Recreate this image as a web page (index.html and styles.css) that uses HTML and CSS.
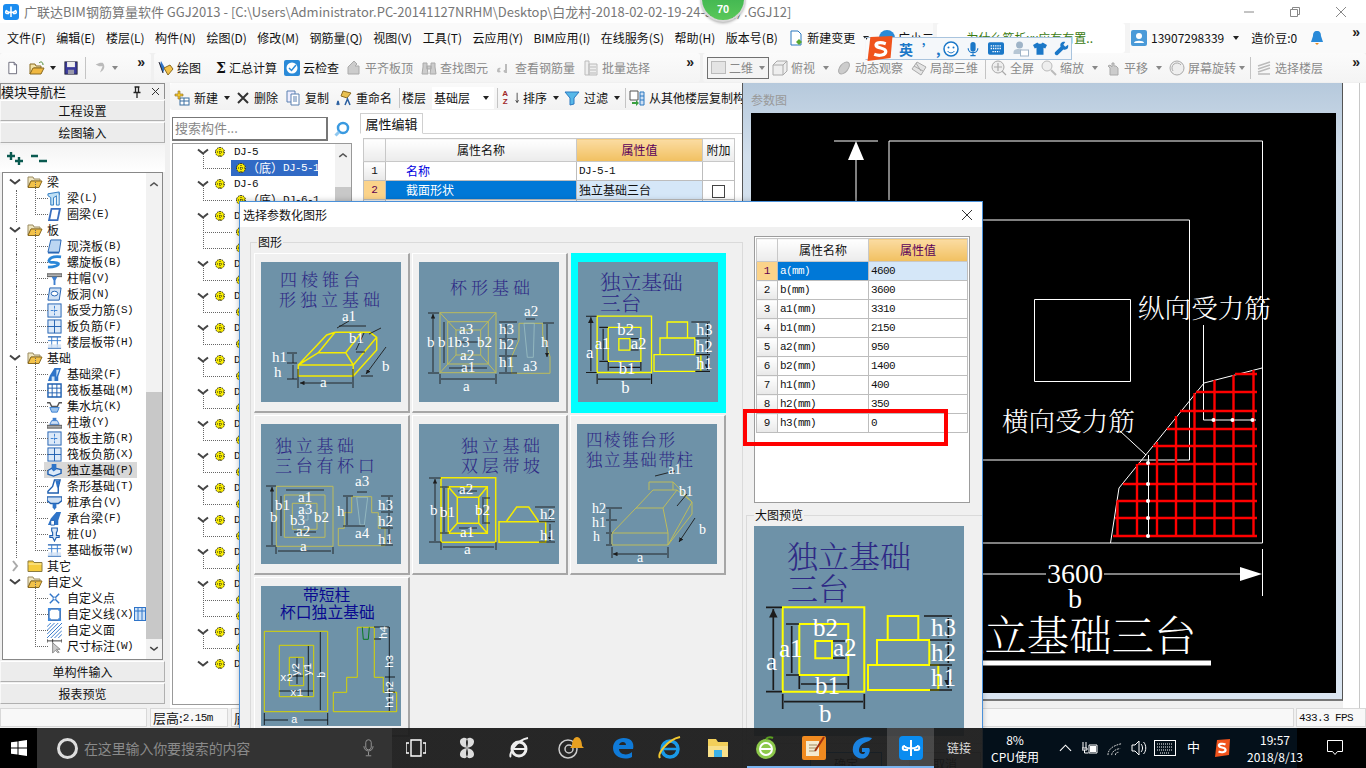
FILE: index.html
```html
<!DOCTYPE html>
<html lang="zh-CN">
<head>
<meta charset="utf-8">
<title>广联达BIM钢筋算量软件 GGJ2013</title>
<link rel="stylesheet" href="styles.css">
</head>
<body>
<svg class="sprite" aria-hidden="true">
  <defs>
    <marker id="arr" viewBox="0 0 6 6" refX="6" refY="3" markerWidth="5" markerHeight="5" orient="auto-start-reverse"><path d="M0 0L6 3L0 6z" fill="#1c1c1c"/></marker>
    <symbol id="chev" viewBox="0 0 16 16"><path d="M3 5.500l5 4 5-4" fill="none" stroke="#444" stroke-width="2"/></symbol>
    <symbol id="chevr" viewBox="0 0 16 16"><path d="M6 3l4 5-4 5" fill="none" stroke="#aaa" stroke-width="2"/></symbol>
    <symbol id="chevu" viewBox="0 0 16 16"><path d="M3 10.500l5-4 5 4" fill="none" stroke="#555" stroke-width="2"/></symbol>
    <symbol id="fopen" viewBox="0 0 16 16"><path d="M1 3h5l1 2h6v2H4L1 13z" fill="#efe6c0" stroke="#9a8a60"/><path d="M4 7h11l-3 6.500H1z" fill="#f3c24a" stroke="#8a6a20"/></symbol>
    <symbol id="fclosed" viewBox="0 0 16 16"><path d="M1 3h5l1 1.500h8v9H1z" fill="#f6cc3e" stroke="#8a7a40"/><path d="M1.500 6h13" stroke="#fff2b0"/></symbol>
    <symbol id="i-beam" viewBox="0 0 16 16"><path d="M1 3l12-2v3l-6 3v8H4V7L1 5z" fill="#bfe0f5" stroke="#2a78c0"/><path d="M10 5v10h3V2" fill="#dff0fa" stroke="#2a78c0"/></symbol>
    <symbol id="i-ring" viewBox="0 0 16 16"><path d="M4 1h11l-3 14H1z" fill="#3a6fc0"/><path d="M5.500 3h7l-2 10h-7z" fill="#fff"/></symbol>
    <symbol id="i-slab" viewBox="0 0 16 16"><path d="M4 1h11l-2 13H1z" fill="#bcd6f2" stroke="#1f5fb0"/><path d="M1 14h12v1.500H1z" fill="#1f5fb0"/></symbol>
    <symbol id="i-spiral" viewBox="0 0 16 16"><path d="M15 2C7 1 3 3 2 6c0 3 8 1 10 3 1 2-4 4-11 4" fill="none" stroke="#2a86d8" stroke-width="3"/></symbol>
    <symbol id="i-cap" viewBox="0 0 16 16"><path d="M0 3h16v3H0z" fill="#b0b0b0" stroke="#555"/><path d="M5 6h6l-2 4H7z M7 10h2v5H7z" fill="#3f7fd0"/></symbol>
    <symbol id="i-hole" viewBox="0 0 16 16"><path d="M3 1h12l-2 13H1z" fill="#cfe0f4" stroke="#1f5fb0"/><ellipse cx="8" cy="7" rx="3.500" ry="2.500" fill="#fff" stroke="#1f5fb0"/></symbol>
    <symbol id="i-rebar" viewBox="0 0 16 16"><rect x="1" y="1" width="14" height="14" fill="#dce9f8" stroke="#1f5fb0"/><path d="M8 3v10M4 8h8" stroke="#3b7fd0" stroke-dasharray="3 1"/></symbol>
    <symbol id="i-neg" viewBox="0 0 16 16"><rect x="1" y="1" width="14" height="14" fill="#dce9f8" stroke="#1f5fb0"/><path d="M8 1v14M1 8h14" stroke="#1f5fb0"/></symbol>
    <symbol id="i-strip" viewBox="0 0 16 16"><path d="M1 2h14M1 14h14" stroke="#1f5fb0" stroke-width="1.500"/><path d="M5 2v12M11 2v12M1 6h14" stroke="#3b7fd0"/><rect x="1" y="10" width="14" height="4" fill="#cfe0f4" opacity=".8"/></symbol>
    <symbol id="i-fbeam" viewBox="0 0 16 16"><path d="M1 15l2-6 5-8h7l-3 9v5z" fill="#2f74c8"/><path d="M5 15v-5h3v5zM10 3h3l-3 8z" fill="#cde3f7"/></symbol>
    <symbol id="i-raft" viewBox="0 0 16 16"><path d="M1 1h14v14H1z" fill="#fff" stroke="#1f5fb0" stroke-width="1.500"/><path d="M5.500 1v14M10.500 1v14M1 5.500h14M1 10.500h14" stroke="#1f5fb0"/></symbol>
    <symbol id="i-pit" viewBox="0 0 16 16"><path d="M0 4h3l2 4h6l2-4h3" fill="none" stroke="#555" stroke-width="1.500"/><path d="M3 9h10l-2 5H5z" fill="#9cc4ee" stroke="#3b7fd0"/></symbol>
    <symbol id="i-pier" viewBox="0 0 16 16"><path d="M6 3h4v3H6z" fill="#3f7fd0"/><path d="M5 6h6l2 4H3z" fill="#cfe0f4" stroke="#3f7fd0"/><path d="M0 11h16v3H0z" fill="#aaa" stroke="#555"/></symbol>
    <symbol id="i-found" viewBox="0 0 16 16"><path d="M1 8l5-3 9 2v4l-8 3-6-2z" fill="#dce9f8" stroke="#1f5fb0" stroke-width="1.500"/><path d="M5 1h5v6l-3 2-2-2z" fill="#2f74c8"/></symbol>
    <symbol id="i-strip2" viewBox="0 0 16 16"><path d="M1 15v-2l5-5 2-7h6L12 9v6z" fill="#fff" stroke="#1f5fb0" stroke-width="1.500"/><path d="M9 2h5l-3 8z" fill="#2f74c8"/></symbol>
    <symbol id="i-pcap" viewBox="0 0 16 16"><path d="M0 2h16v4l-4 3H4L0 6z" fill="#cfe0f4" stroke="#1f5fb0" stroke-width="1.500"/><path d="M6 9h4v4l-2 3-2-3z" fill="#2f74c8"/></symbol>
    <symbol id="i-cbeam" viewBox="0 0 16 16"><path d="M1 15l3-7 6-7h5l-3 9v5z" fill="#2f74c8"/><path d="M4 15v-5h4v5z" fill="#fff" stroke="#1f5fb0"/></symbol>
    <symbol id="i-pile" viewBox="0 0 16 16"><path d="M5 1h6v3l-1 2v3h3v2H10l-2 4-2-4H3V9h3V6L5 4z" fill="#dce9f8" stroke="#1f5fb0" stroke-width="1.200"/></symbol>
    <symbol id="i-point" viewBox="0 0 16 16"><path d="M3 3l10 10M13 3L3 13" stroke="#2f74c8" stroke-width="1.500"/><circle cx="8" cy="8" r="1.500" fill="#fff" stroke="#2f74c8"/></symbol>
    <symbol id="i-cline" viewBox="0 0 16 16"><rect x="2" y="2" width="12" height="12" fill="none" stroke="#1f5fb0" stroke-width="1.500"/><path d="M1 1h3v3H1zM12 1h3v3h-3zM1 12h3v3H1zM12 12h3v3h-3z" fill="#3f8ae0"/></symbol>
    <symbol id="i-hatch" viewBox="0 0 16 16"><path d="M0 4l4-4M0 8l8-8M0 12L12 0M0 16L16 0M4 16L16 4M8 16l8-8M12 16l4-4" stroke="#2f74c8"/></symbol>
    <symbol id="i-dim" viewBox="0 0 16 16"><path d="M0 2h16M0 0v4M6 0v4M16 0v4" stroke="#333"/><path d="M6 4v11l3-3 3 3 1-1-3-3h4z" fill="#ccc" stroke="#888"/></symbol>
    <symbol id="i-grid" viewBox="0 0 12 14"><rect x=".5" y=".5" width="11" height="13" fill="#cfe3f8" stroke="#2f74c8"/><path d="M4 1v12M8 1v12M1 4h10" stroke="#2f74c8"/></symbol>
    <symbol id="gear" viewBox="0 0 12 12"><circle cx="6" cy="6" r="4.500" fill="#f8ec00" stroke="#222" stroke-dasharray="1.500 1"/><path d="M1 6h10M6 1v10" stroke="#222" stroke-dasharray="1 1"/></symbol>
    <symbol id="t-new" viewBox="0 0 16 16"><path d="M3.500 1H10l3 3v11H3.500z" fill="#fff" stroke="#556"/><path d="M10 1v3h3" fill="#dde" stroke="#556"/></symbol>
    <symbol id="t-open" viewBox="0 0 16 16"><path d="M1 4h5l1 2h5v2H5l-4 6z" fill="#f3e3a8" stroke="#8a6a20"/><path d="M4 8h11l-3 6H1z" fill="#f0b840" stroke="#8a6a20"/><path d="M10 3c2-2 4-1 4 2" fill="none" stroke="#4a8a30"/></symbol>
    <symbol id="t-save" viewBox="0 0 16 16"><rect x="1" y="1" width="14" height="14" fill="#3a3a9c" stroke="#223"/><rect x="3.500" y="1" width="9" height="6" fill="#eee"/><rect x="4.500" y="10" width="7" height="5" fill="#99a"/></symbol>
    <symbol id="t-undo" viewBox="0 0 16 16"><path d="M11 2c3 3 3 8-3 11l3-7H7l-4-2 5-2z" fill="#bbb"/></symbol>
    <symbol id="t-draw" viewBox="0 0 16 16"><path d="M3 1l4 7-2 5-3-8z" fill="#2f74c8"/><path d="M6 8l6-3 3 4-5 6z" fill="#f3c24a" stroke="#8a6a20"/><path d="M1 2l4 11" stroke="#223"/></symbol>
    <symbol id="t-cloud" viewBox="0 0 16 16"><rect width="16" height="16" rx="2" fill="#2a8ad8"/><circle cx="8" cy="8" r="5.500" fill="#fff"/><path d="M5 8l2.500 2.500L12 5" fill="none" stroke="#2a8ad8" stroke-width="1.500"/></symbol>
    <symbol id="t-gray1" viewBox="0 0 16 16"><path d="M2 14V7l6-6 3 3-2 2h4v8z" fill="#ccc" stroke="#aaa"/></symbol>
    <symbol id="t-bino" viewBox="0 0 16 16"><path d="M2 3h4v4l1 7H1l1-7zM10 3h4v4l1 7H9l1-7zM6 6h4v3H6z" fill="#ccc" stroke="#aaa"/></symbol>
    <symbol id="t-look" viewBox="0 0 16 16"><path d="M1 11c0-3 2-4 4-3-2 1-2 3 0 4-3 1-4 0-4-1zM9 4h2v9H9c-2-1-2-3 0-3z" fill="#bbb"/></symbol>
    <symbol id="t-batch" viewBox="0 0 16 16"><path d="M2 1h4v14H2zM6 4h8v11H6z" fill="#eee" stroke="#bbb"/><path d="M7 7h6M7 10h6M7 13h6" stroke="#bbb"/></symbol>
    <symbol id="t-cube" viewBox="0 0 16 16"><path d="M1 5l4-4h10v10l-4 4H1zM1 5h10v10M11 5l4-4" fill="#eee" stroke="#aaa"/></symbol>
    <symbol id="t-orbit" viewBox="0 0 16 16"><ellipse cx="8" cy="8" rx="4" ry="7" transform="rotate(40 8 8)" fill="#ccc" stroke="#aaa"/></symbol>
    <symbol id="t-loc" viewBox="0 0 16 16"><path d="M1 9l5-7 9 5-5 8zM5 3l5 8M3 6l9 5" fill="#e4e4e4" stroke="#aaa"/></symbol>
    <symbol id="t-zoomall" viewBox="0 0 16 16"><circle cx="7" cy="7" r="6" fill="#eee" stroke="#aaa"/><path d="M7 3v8M3 7h8M11 11l4 4" stroke="#aaa" stroke-width="1.200"/></symbol>
    <symbol id="t-zoom" viewBox="0 0 16 16"><circle cx="6" cy="6" r="5" fill="#eee" stroke="#bbb"/><path d="M10 10l5 5" stroke="#bbb" stroke-width="2"/></symbol>
    <symbol id="t-pan" viewBox="0 0 16 16"><path d="M5 15V8L3 6l2-1 2 2V3h2v3h2l2 2v7z" fill="#ccc" stroke="#aaa"/></symbol>
    <symbol id="t-rot" viewBox="0 0 16 16"><circle cx="8" cy="8" r="7" fill="#eee" stroke="#aaa"/><path d="M4 11a5 5 0 0 1 8-6" fill="none" stroke="#aaa"/></symbol>
    <symbol id="t-layers" viewBox="0 0 16 16"><path d="M2 6l12-4M2 9l12-4M2 12l12-4M2 14h12" stroke="#bbb" stroke-width="1.500"/></symbol>
    <symbol id="t-change" viewBox="0 0 16 16"><path d="M3 1h7l3 3v11H3z" fill="#fff" stroke="#2a78c0"/><path d="M11 9l3 3-3 3-3-3z" fill="#5aa830"/></symbol>
    <symbol id="c-new" viewBox="0 0 16 16"><rect x="6" y="8" width="9" height="7" fill="#fff" stroke="#3a6fa0"/><path d="M6 11h9M10 8v7" stroke="#3a6fa0"/><path d="M4 1h2v3h3v2H6v3H4V6H1V4h3z" fill="#f3c830" stroke="#8a6a20" stroke-width=".6"/></symbol>
    <symbol id="c-del" viewBox="0 0 14 14"><path d="M2 2l10 10M12 2L2 12" stroke="#333" stroke-width="2"/></symbol>
    <symbol id="c-copy" viewBox="0 0 16 16"><path d="M2 1h8v11H2z" fill="#eef" stroke="#5a80b0"/><path d="M6 4h8v11H6z" fill="#fff" stroke="#5a80b0"/><path d="M8 7h4M8 9h4M8 11h4" stroke="#5a80b0"/></symbol>
    <symbol id="c-ren" viewBox="0 0 16 16"><path d="M7 1l8 2-4 5-6-2z" fill="#e8c050" stroke="#8a6a20"/><path d="M1 15l1-4 1 4M9 15l2.500-6 2.500 6" fill="none" stroke="#2a5fa0" stroke-width="1.500"/></symbol>
    <symbol id="c-sort" viewBox="0 0 12 16"><path d="M9.500 1v13M7.500 11l2 3 2-3" fill="none" stroke="#222"/></symbol>
    <symbol id="c-filter" viewBox="0 0 16 16"><path d="M1 2h14l-5 6v6l-4 1V8z" fill="#58b8e8" stroke="#2a78c0"/></symbol>
    <symbol id="c-cp2" viewBox="0 0 16 16"><path d="M1 1h8v9H1z" fill="#fff" stroke="#555"/><path d="M3 12h4v-2l3 3-3 3v-2H3z" fill="#3aa040"/><path d="M11 2h4v13h-4z" fill="#cfe0f4" stroke="#2a78c0"/><path d="M11 6h4M11 10h4" stroke="#2a78c0"/></symbol>
    <symbol id="search" viewBox="0 0 16 16"><circle cx="9" cy="7" r="5" fill="#fff" stroke="#3a9ae0" stroke-width="2.500"/><path d="M5 11l-3.500 3.500" stroke="#90c8f0" stroke-width="3"/></symbol>
    <symbol id="d-san" viewBox="0 0 210 210">
      <rect width="210" height="210" fill="#6e92a8"/>
      <text class="dt dt-big" x="33" y="42">独立基础</text>
      <text class="dt dt-big" x="33" y="74">三台</text>
      <path class="yb" d="M28.700 81.300h81.600v84.400H28.700zM45.300 98h49v51h-49zM61.300 115H78v17.300H61.300zM133.700 90h30.600v24h-30.600zM123 114h52.300v25H123zM114 139h70.300v25H114z"/>
      <path class="dk2" d="M12 81.300h16M12 165.700h16M32 98h13M32 149h13M79 115h12M79 132h12M45.300 150v13M94.300 150v13M28.700 168v15M110.300 168v15M170 90h28M176 114h22M176 139h22M176 164h22"/>
      <path class="dk2 ar" d="M19.300 83V164M37.700 100V147M47 158h46M30 175.700h79M194.300 92V112M194.300 116v21M194.300 141v21"/>
      <g class="wt wt-big">
        <text x="12" y="144">a</text><text x="25" y="131">a1</text><text x="59" y="110">b2</text><text x="79" y="130">a2</text><text x="61" y="168">b1</text><text x="65" y="196">b</text><text x="177" y="110">h3</text><text x="177" y="135">h2</text><text x="177" y="160">h1</text>
      </g>
    </symbol>
    <symbol id="tb-win" viewBox="0 0 16 16"><path d="M0 2.300l6.500-.9v6.200H0zM7.500 1.200L16 0v7.600H7.500zM0 8.500h6.500v6.100L0 13.700zM7.500 8.500H16V16l-8.500-1.200z" fill="#fff"/></symbol>
  </defs>
</svg>

<header class="titlebar">
  <svg class="logo" viewBox="0 0 16 16"><rect width="16" height="16" rx="3" fill="#1a8cf0"/><path d="M8 2.500V13M4 6.500c0 2.500 8 2.500 8 0M4 6.500c-1.500 0-2 3 0 3h2M12 6.500c1.500 0 2 3 0 3h-2" fill="none" stroke="#fff" stroke-width="1.500"/></svg>
  <span class="title-text">广联达BIM钢筋算量软件 GGJ2013 - [C:\Users\Administrator.PC-20141127NRHM\Desktop\白龙村-2018-02-02-19-24-35(白) .GGJ12]</span>
  <div class="winctl">
    <svg viewBox="0 0 10 10"><path d="M0 5h10" stroke="#888"/></svg>
    <svg viewBox="0 0 10 10"><path d="M.5 2.500h7v7h-7zM2.500 2.500v-2h7v7h-2" fill="none" stroke="#888"/></svg>
    <svg viewBox="0 0 10 10"><path d="M0 0l10 10M10 0L0 10" stroke="#888"/></svg>
  </div>
</header>

<nav class="menubar">
  <div class="menu-items">
    <span>文件(F)</span><span>编辑(E)</span><span>楼层(L)</span><span>构件(N)</span><span>绘图(D)</span><span>修改(M)</span><span>钢筋量(Q)</span><span>视图(V)</span><span>工具(T)</span><span>云应用(Y)</span><span>BIM应用(I)</span><span>在线服务(S)</span><span>帮助(H)</span><span>版本号(B)</span>
    <span class="mi-icon"><svg class="ic16"><use href="#t-change"/></svg>新建变更<b class="caret"></b></span>
    <span class="mi-icon mi-guang"><svg class="ic16" viewBox="0 0 16 16"><circle cx="8" cy="8" r="8" fill="#2a8ad8"/></svg>广小二</span>
  </div>
  <div class="news"><span>为什么筋析xx应有有置..</span></div>
  <div class="userbox">
    <svg class="ic16" viewBox="0 0 16 16"><rect width="16" height="16" rx="2" fill="#4a9ad8"/><circle cx="8" cy="6" r="3" fill="#fff"/><path d="M3 13c0-3 10-3 10 0z" fill="#fff"/></svg>
    <span>13907298339</span><b class="caret"></b><span class="ml8">造价豆:0</span>
    <svg class="ic16 ml8" viewBox="0 0 16 16"><path d="M8 1c3 0 4 2 4 5l2 6H2l2-6c0-3 1-5 4-5z" fill="#2a8ad8"/><path d="M6 13h4l-2 2z" fill="#e88a20"/></svg>
    <span class="more push">»</span>
  </div>
</nav>

<div class="toolbar">
  <div class="tseg tseg1">
    <svg class="ic12"><use href="#t-new"/></svg>
    <svg class="ic16 ml10"><use href="#t-open"/></svg><b class="caret ml6"></b>
    <svg class="ic14 ml8"><use href="#t-save"/></svg>
    <i class="tsep ml7"></i>
    <svg class="ic14 ml7"><use href="#t-undo"/></svg><b class="caret caret-g ml10"></b>
    <span class="more push">»</span>
  </div>
  <div class="tseg tseg2">
    <span class="tb"><svg class="ic16"><use href="#t-draw"/></svg>绘图</span>
    <span class="tb ml15"><b class="sigma">Σ</b>汇总计算</span>
    <span class="tb ml7"><svg class="ic16"><use href="#t-cloud"/></svg>云检查</span>
    <span class="tb dis ml7"><svg class="ic16"><use href="#t-gray1"/></svg>平齐板顶</span>
    <span class="tb dis ml8"><svg class="ic16"><use href="#t-bino"/></svg>查找图元</span>
    <span class="tb dis ml8"><svg class="ic16"><use href="#t-look"/></svg>查看钢筋量</span>
    <span class="tb dis ml8"><svg class="ic16"><use href="#t-batch"/></svg>批量选择</span>
    <span class="more push">»</span>
  </div>
  <div class="tseg tseg3">
    <span class="view2d"><i class="sq"></i>二维<b class="caret caret-g"></b></span>
    <span class="tb dis ml3"><svg class="ic16"><use href="#t-cube"/></svg>俯视<b class="caret caret-g ml3"></b></span>
    <span class="tb dis ml7"><svg class="ic16"><use href="#t-orbit"/></svg>动态观察</span>
    <span class="tb dis ml8"><svg class="ic16"><use href="#t-loc"/></svg>局部三维</span>
    <i class="tsep ml7"></i>
    <span class="tb dis ml5"><svg class="ic16"><use href="#t-zoomall"/></svg>全屏</span>
    <span class="tb dis ml7"><svg class="ic16"><use href="#t-zoom"/></svg>缩放<b class="caret caret-g ml3"></b></span>
    <span class="tb dis ml7"><svg class="ic16"><use href="#t-pan"/></svg>平移<b class="caret caret-g ml3"></b></span>
    <span class="tb dis ml7"><svg class="ic16"><use href="#t-rot"/></svg>屏幕旋转<b class="caret caret-g ml2"></b></span>
    <i class="tsep ml5"></i>
    <span class="tb dis ml5"><svg class="ic16"><use href="#t-layers"/></svg>选择楼层</span>
    <span class="more push">»</span>
  </div>
</div>

<main class="workspace">
  <aside class="nav">
    <div class="nav-head">
      <span class="nav-name">模块导航栏</span>
      <svg class="nav-pin" viewBox="0 0 10 12"><path d="M2.500 1h5M3.500 1v5M6.500 1v5M1.500 6.500h7M5 7v5" fill="none" stroke="#222" stroke-width="1.300"/></svg>
      <svg class="nav-x" viewBox="0 0 9 9"><path d="M1 1l7 7M8 1L1 8" stroke="#333"/></svg>
    </div>
    <button class="nav-btn">工程设置</button>
    <button class="nav-btn">绘图输入</button>
    <div class="nav-tools">
      <svg viewBox="0 0 18 16"><path d="M1 5h8M5 1v8M9 10h8M13 6v8" stroke="#0a5a50" stroke-width="2.400"/></svg>
      <svg viewBox="0 0 18 16"><path d="M1 5h7M9 10h8" stroke="#0a5a50" stroke-width="2.400"/></svg>
    </div>
    <div class="nav-tree">
      <div class="rows">
        <div class="row p"><svg class="chev"><use href="#chev"/></svg><svg class="fold"><use href="#fopen"/></svg>梁</div>
        <div class="row c"><svg class="ric"><use href="#i-beam"/></svg>梁<i>(L)</i></div>
        <div class="row c"><svg class="ric"><use href="#i-ring"/></svg>圈梁<i>(E)</i></div>
        <div class="row p"><svg class="chev"><use href="#chev"/></svg><svg class="fold"><use href="#fopen"/></svg>板</div>
        <div class="row c"><svg class="ric"><use href="#i-slab"/></svg>现浇板<i>(B)</i></div>
        <div class="row c"><svg class="ric"><use href="#i-spiral"/></svg>螺旋板<i>(B)</i></div>
        <div class="row c"><svg class="ric"><use href="#i-cap"/></svg>柱帽<i>(V)</i></div>
        <div class="row c"><svg class="ric"><use href="#i-hole"/></svg>板洞<i>(N)</i></div>
        <div class="row c"><svg class="ric"><use href="#i-rebar"/></svg>板受力筋<i>(S)</i></div>
        <div class="row c"><svg class="ric"><use href="#i-neg"/></svg>板负筋<i>(F)</i></div>
        <div class="row c"><svg class="ric"><use href="#i-strip"/></svg>楼层板带<i>(H)</i></div>
        <div class="row p"><svg class="chev"><use href="#chev"/></svg><svg class="fold"><use href="#fopen"/></svg>基础</div>
        <div class="row c"><svg class="ric"><use href="#i-fbeam"/></svg>基础梁<i>(F)</i></div>
        <div class="row c"><svg class="ric"><use href="#i-raft"/></svg>筏板基础<i>(M)</i></div>
        <div class="row c"><svg class="ric"><use href="#i-pit"/></svg>集水坑<i>(K)</i></div>
        <div class="row c"><svg class="ric"><use href="#i-pier"/></svg>柱墩<i>(Y)</i></div>
        <div class="row c"><svg class="ric"><use href="#i-rebar"/></svg>筏板主筋<i>(R)</i></div>
        <div class="row c"><svg class="ric"><use href="#i-neg"/></svg>筏板负筋<i>(X)</i></div>
        <div class="row c sel"><svg class="ric"><use href="#i-found"/></svg>独立基础<i>(P)</i></div>
        <div class="row c"><svg class="ric"><use href="#i-strip2"/></svg>条形基础<i>(T)</i></div>
        <div class="row c"><svg class="ric"><use href="#i-pcap"/></svg>桩承台<i>(V)</i></div>
        <div class="row c"><svg class="ric"><use href="#i-cbeam"/></svg>承台梁<i>(F)</i></div>
        <div class="row c"><svg class="ric"><use href="#i-pile"/></svg>桩<i>(U)</i></div>
        <div class="row c"><svg class="ric"><use href="#i-strip"/></svg>基础板带<i>(W)</i></div>
        <div class="row p"><svg class="chev"><use href="#chevr"/></svg><svg class="fold"><use href="#fclosed"/></svg>其它</div>
        <div class="row p"><svg class="chev"><use href="#chev"/></svg><svg class="fold"><use href="#fopen"/></svg>自定义</div>
        <div class="row c last"><svg class="ric"><use href="#i-point"/></svg>自定义点</div>
        <div class="row c last"><svg class="ric"><use href="#i-cline"/></svg>自定义线<i>(X)</i><svg class="mini"><use href="#i-grid"/></svg></div>
        <div class="row c last"><svg class="ric"><use href="#i-hatch"/></svg>自定义面</div>
        <div class="row c last"><svg class="ric"><use href="#i-dim"/></svg>尺寸标注<i>(W)</i></div>
      </div>
      <div class="scroll scroll-nav">
        <span class="sb"><svg><use href="#chevu"/></svg></span>
        <span class="thumb"></span>
        <span class="sb"><svg><use href="#chev"/></svg></span>
      </div>
    </div>
    <button class="nav-btn nav-btn-2">单构件输入</button>
    <button class="nav-btn">报表预览</button>
  </aside>

  <section class="editor">
    <div class="comp-tools">
      <span class="tb"><svg class="ic16"><use href="#c-new"/></svg>新建<b class="caret"></b></span>
      <span class="tb ml6"><svg class="ic14"><use href="#c-del"/></svg>删除</span>
      <span class="tb ml7"><svg class="ic16"><use href="#c-copy"/></svg>复制</span>
      <span class="tb ml7"><svg class="ic16"><use href="#c-ren"/></svg>重命名</span>
      <i class="tsep ml7"></i>
      <span class="tb ml2">楼层</span>
      <span class="floor"><span>基础层</span><b class="caret"></b></span>
      <i class="tsep ml3"></i>
      <span class="tb ml3"><span class="az">A<br>Z</span><svg class="ic-sort"><use href="#c-sort"/></svg>排序<b class="caret"></b></span>
      <span class="tb ml5"><svg class="ic16"><use href="#c-filter"/></svg>过滤<b class="caret"></b></span>
      <i class="tsep ml5"></i>
      <span class="tb ml3 nowrap"><svg class="ic16"><use href="#c-cp2"/></svg>从其他楼层复制构</span>
    </div>
    <div class="panes">
      <div class="comp-pane">
        <div class="search-row"><div class="search-input">搜索构件...</div><svg class="ic16"><use href="#search"/></svg></div>
        <div class="comp-tree">
          <div class="rows">
            <div class="crow p"><svg class="chev"><use href="#chev"/></svg><svg class="g"><use href="#gear"/></svg><i>DJ-5</i></div>
            <div class="crow c sel"><span class="cbody"><svg class="g"><use href="#gear"/></svg>（底）<i>DJ-5-1</i></span></div>
            <div class="crow p"><svg class="chev"><use href="#chev"/></svg><svg class="g"><use href="#gear"/></svg><i>DJ-6</i></div>
            <div class="crow c"><span class="cbody"><svg class="g"><use href="#gear"/></svg>（底）<i>DJ-6-1</i></span></div>
            <div class="crow p"><svg class="chev"><use href="#chev"/></svg><svg class="g"><use href="#gear"/></svg><i>DJ-7</i></div>
            <div class="crow c"><span class="cbody"><svg class="g"><use href="#gear"/></svg></span></div>
            <div class="crow c"><span class="cbody"><svg class="g"><use href="#gear"/></svg></span></div>
            <div class="crow p"><svg class="chev"><use href="#chev"/></svg><svg class="g"><use href="#gear"/></svg><i>DJ-8</i></div>
            <div class="crow c"><span class="cbody"><svg class="g"><use href="#gear"/></svg></span></div>
            <div class="crow p"><svg class="chev"><use href="#chev"/></svg><svg class="g"><use href="#gear"/></svg><i>DJ-9</i></div>
            <div class="crow c"><span class="cbody"><svg class="g"><use href="#gear"/></svg></span></div>
            <div class="crow p"><svg class="chev"><use href="#chev"/></svg><svg class="g"><use href="#gear"/></svg><i>DJ-10</i></div>
            <div class="crow c"><span class="cbody"><svg class="g"><use href="#gear"/></svg></span></div>
            <div class="crow p"><svg class="chev"><use href="#chev"/></svg><svg class="g"><use href="#gear"/></svg><i>DJ-11</i></div>
            <div class="crow c"><span class="cbody"><svg class="g"><use href="#gear"/></svg></span></div>
            <div class="crow p"><svg class="chev"><use href="#chev"/></svg><svg class="g"><use href="#gear"/></svg><i>DJ-12</i></div>
            <div class="crow c"><span class="cbody"><svg class="g"><use href="#gear"/></svg></span></div>
            <div class="crow p"><svg class="chev"><use href="#chev"/></svg><svg class="g"><use href="#gear"/></svg><i>DJ-13</i></div>
            <div class="crow c"><span class="cbody"><svg class="g"><use href="#gear"/></svg></span></div>
            <div class="crow p"><svg class="chev"><use href="#chev"/></svg><svg class="g"><use href="#gear"/></svg><i>DJ-14</i></div>
            <div class="crow c"><span class="cbody"><svg class="g"><use href="#gear"/></svg></span></div>
            <div class="crow p"><svg class="chev"><use href="#chev"/></svg><svg class="g"><use href="#gear"/></svg><i>DJ-15</i></div>
            <div class="crow c"><span class="cbody"><svg class="g"><use href="#gear"/></svg></span></div>
            <div class="crow p"><svg class="chev"><use href="#chev"/></svg><svg class="g"><use href="#gear"/></svg><i>DJ-16</i></div>
            <div class="crow c"><span class="cbody"><svg class="g"><use href="#gear"/></svg></span></div>
            <div class="crow p"><svg class="chev"><use href="#chev"/></svg><svg class="g"><use href="#gear"/></svg><i>DJ-17</i></div>
            <div class="crow c"><span class="cbody"><svg class="g"><use href="#gear"/></svg></span></div>
            <div class="crow p"><svg class="chev"><use href="#chev"/></svg><svg class="g"><use href="#gear"/></svg><i>DJ-18</i></div>
            <div class="crow c"><span class="cbody"><svg class="g"><use href="#gear"/></svg></span></div>
            <div class="crow c"><span class="cbody"><svg class="g"><use href="#gear"/></svg></span></div>
            <div class="crow p"><svg class="chev"><use href="#chev"/></svg><svg class="g"><use href="#gear"/></svg><i>DJ-19</i></div>
            <div class="crow c"><span class="cbody"><svg class="g"><use href="#gear"/></svg></span></div>
            <div class="crow p"><svg class="chev"><use href="#chev"/></svg><svg class="g"><use href="#gear"/></svg><i>DJ-20</i></div>
          </div>
          <div class="scroll scroll-comp">
            <span class="sb"><svg><use href="#chevu"/></svg></span>
            <span class="thumb"></span>
          </div>
        </div>
      </div>
      <div class="prop-pane">
        <div class="tabstrip"><span class="tab">属性编辑</span></div>
        <table class="grid grid-prop">
          <tr><th class="num"></th><th class="name">属性名称</th><th class="val">属性值</th><th class="add">附加</th></tr>
          <tr><td class="num">1</td><td class="pname link">名称</td><td class="mono">DJ-5-1</td><td></td></tr>
          <tr class="cur"><td class="num">2</td><td class="pname">截面形状</td><td class="vsel">独立基础三台</td><td class="ctr"><i class="check"></i></td></tr>
          <tr><td class="num"></td><td></td><td></td><td></td></tr>
        </table>
      </div>
    </div>
  </section>

  <section class="param-win">
    <div class="param-title">参数图</div>
    <div class="cad">
      <svg viewBox="751 113 585 580">
        <g class="cw">
          <path d="M889 200V141H1262.500V543H889"/>
          <path d="M960 220H1189.500V460H960"/>
          <path d="M1034.500 299.500H1130.500V381.500H1034.500z"/>
          <path d="M1203.500 325V420H1256M1120 431L1146 455M1148.500 455V537"/>
          <path d="M1110.500 543L1119 488L1204 383L1262 368"/>
          <path d="M834 141H878M856 160V202"/>
          <path d="M1262.500 549V596M983 574H1046M1104 574H1240"/>
        </g>
        <g class="cr">
          <path d="M1113 536H1257M1115 518H1257M1117 501H1257M1123 484H1257M1138 464H1257M1153 446H1257M1167 429H1257M1180 411H1257M1196 392H1257M1235 374H1257"/>
          <path d="M1117.500 501V536M1137 464V536M1157 442V536M1176 416V536M1194.500 393V536M1214.500 380V536M1233.500 375V536M1253.500 370V536"/>
        </g>
        <g class="cd">
          <circle cx="1213.500" cy="420" r="2"/><circle cx="1232.500" cy="420" r="2"/><circle cx="1252.500" cy="420" r="2"/>
          <circle cx="1148" cy="463" r="2"/><circle cx="1148" cy="484" r="2"/><circle cx="1148" cy="501" r="2"/><circle cx="1148" cy="518" r="2"/><circle cx="1148" cy="536" r="2"/>
          <path d="M856 141L864 160H848zM1262 574L1240 567V581z"/>
          <rect x="942" y="660.500" width="269" height="5"/>
        </g>
        <g class="ct">
          <text class="ct26" x="1138" y="318">纵向受力筋</text>
          <text class="ct26" x="1002" y="431">横向受力筋</text>
          <text class="ct3600" x="1047" y="583">3600</text>
          <text class="ct3600" x="1068" y="608">b</text>
          <text class="ct42" x="942" y="651">独立基础三台</text>
        </g>
      </svg>
    </div>
  </section>
  <div class="right-strip"><i></i></div>
</main>

<footer class="statusbar">
  <span class="sbox s1"></span>
  <span class="sbox s2">层高:<i>2.15m</i></span>
  <span class="sbox s3">底标高</span>
  <span class="sbox s4"></span>
  <span class="sbox s5"><i>433.3 FPS</i></span>
</footer>

<div class="taskbar">
  <div class="start"><svg><use href="#tb-win"/></svg></div>
  <div class="tsearch">
    <span class="cortana"></span>
    <span class="tsearch-text">在这里输入你要搜索的内容</span>
    <svg class="tmic" viewBox="0 0 12 20"><rect x="3" y="1" width="6" height="11" rx="3" fill="none" stroke="#999"/><path d="M1 8c0 7 10 7 10 0M6 14v4M3 18.500h6" fill="none" stroke="#999"/></svg>
  </div>
  <div class="tapps">
    <svg class="ta ta-view" viewBox="0 0 20 18"><path d="M5 1h10v16H5zM3 4H0v10h3M17 4h3v10h-3" fill="none" stroke="#fff" stroke-width="1.400"/></svg>
    <svg class="ta ta-fan" viewBox="0 0 22 22"><path d="M11 11C3 10 2 2 7 1s6 4 4 10zM11 11c8-1 9-9 4-10s-6 4-4 10zM11 11C3 12 2 20 7 21s6-4 4-10zM11 11c8 1 9 9 4 10s-6-4-4-10z" fill="#ddd"/></svg>
    <svg class="ta ta-ie" viewBox="0 0 22 22"><circle cx="11" cy="12" r="7" fill="none" stroke="#eee" stroke-width="3"/><path d="M6 12h11M3 20c-3-2 5-17 17-19" fill="none" stroke="#eee" stroke-width="2"/></svg>
    <svg class="ta ta-spiral" viewBox="0 0 30 24"><circle cx="11" cy="14" r="9" fill="none" stroke="#ccc" stroke-width="1.500"/><circle cx="12" cy="14" r="4" fill="none" stroke="#ccc" stroke-width="1.500"/><path d="M15 11c0-5 2-9 5-9s5 4 5 9l2 2H13z" fill="#e8a020"/></svg>
    <svg class="ta ta-edge" viewBox="0 0 22 22"><path d="M21 12H7c0 6 9 7 13 3v5C12 24 1 20 1 11S10-1 17 2c4 2 5 6 4 10zM14 8C14 4 8 4 7 8z" fill="#0f7ad8"/></svg>
    <svg class="ta ta-ie2" viewBox="0 0 26 24"><circle cx="13" cy="13" r="8" fill="none" stroke="#1a9ae8" stroke-width="3.500"/><path d="M6 13h15" stroke="#1a9ae8" stroke-width="2.500"/><path d="M3 22C0 18 10 4 23 1" fill="none" stroke="#f2c830" stroke-width="2"/></svg>
    <svg class="ta ta-folder" viewBox="0 0 22 22"><path d="M1 2h8l2 3h10v15H1z" fill="#f2cf5a"/><path d="M1 9h20v11H1z" fill="#f8e08a"/><path d="M7 20v-7h8v7z" fill="#3ab0e8"/></svg>
    <svg class="ta ta-green" viewBox="0 0 24 24"><circle cx="12" cy="13" r="10" fill="#8cc84a"/><circle cx="12" cy="13" r="6" fill="none" stroke="#fff" stroke-width="2"/><path d="M6 13h12" stroke="#fff" stroke-width="2"/><path d="M12 3c2-2 5-2 7-1" stroke="#5aa020" stroke-width="2" fill="none"/></svg>
    <svg class="ta ta-note" viewBox="0 0 24 24"><rect width="24" height="24" rx="2" fill="#f08a20"/><path d="M4 5h13v15H4z" fill="#f4ead0"/><path d="M7 9h8M7 12h8M7 15h6" stroke="#a08a60"/><path d="M22 1L13 15" stroke="#a03010" stroke-width="2"/></svg>
    <svg class="ta ta-g" viewBox="0 0 24 24"><path d="M22 2c-5-2-17-1-19 9s8 13 12 11 6-8 4-10h-7v4h3c0 2-3 3-5 1s-1-8 4-10 6-2 8-5z" fill="#1a82e0"/></svg>
    <span class="ta-active"><svg viewBox="0 0 24 24"><rect width="24" height="24" rx="4" fill="#0a8cf0"/><path d="M12 4v16M6 10c0 3 12 3 12 0M6 10c-3 0-3 4 0 4h3M18 10c3 0 3 4 0 4h-3" fill="none" stroke="#fff" stroke-width="2"/></svg></span>
    <span class="ta-text">链接</span>
  </div>
  <div class="tray">
    <div class="cpu"><span>8%</span><span>CPU使用</span></div>
    <svg class="tr tr-up" viewBox="0 0 14 8"><path d="M1 7l6-6 6 6" fill="none" stroke="#fff" stroke-width="1.200"/></svg>
    <svg class="tr tr-bat" viewBox="0 0 16 14"><path d="M1 1v6M4 1v6M0 7h5v2H0zM7 4h8v8H7zM2.500 9v3h4" fill="none" stroke="#fff"/><rect x="8" y="5" width="6" height="6" fill="#fff"/></svg>
    <svg class="tr tr-wifi" viewBox="0 0 18 16"><path d="M2 15C2 9 7 5 16 3M6 15c0-3 3-6 9-7M10 15c0-2 1-3 4-3" fill="none" stroke="#ddd" stroke-dasharray="2 1"/></svg>
    <svg class="tr tr-vol" viewBox="0 0 16 16"><path d="M1 5h3l4-4v14l-4-4H1zM10 4c2 2 2 6 0 8M12.500 2c3 3 3 9 0 12" fill="none" stroke="#fff"/></svg>
    <svg class="tr tr-kb" viewBox="0 0 22 16"><rect x=".5" y=".5" width="21" height="15" fill="none" stroke="#fff"/><path d="M3 4h16M3 7h16M3 10h16M6 13h10" stroke="#fff" stroke-dasharray="1 1"/></svg>
    <span class="tr-zh">中</span>
    <svg class="tr tr-s" viewBox="0 0 16 18"><path d="M3 1l13-1-1 16-14 2z" fill="#f0531c"/><path d="M11.500 5.500C8 4 4.500 5 5 7c.5 2 6 1 6.500 3.500S8 14 4.500 12.500" fill="none" stroke="#fff" stroke-width="2.200"/></svg>
    <div class="clock"><span>19:57</span><span>2018/8/13</span></div>
    <svg class="tr tr-act" viewBox="0 0 16 16"><path d="M.5.500h15v11h-5l-2.500 3-2.500-3h-5z" fill="none" stroke="#fff"/></svg>
  </div>
</div>

<!-- floating: green score badge -->
<div class="badge">70</div>

<!-- floating: Sogou IME status bar -->
<div class="ime">
  <svg class="ime-s" viewBox="0 0 28 26"><path d="M4 1l23-1-2 23-24 3z" fill="#f0531c"/><path d="M20 8c-6-2-11-1-10 2s10 2 10 6-7 5-12 3" fill="none" stroke="#fff" stroke-width="3.400"/></svg>
  <span class="ime-en">英</span>
  <span class="ime-p">’,</span>
  <svg class="ime-i ime-smile" viewBox="0 0 16 16"><circle cx="8" cy="8" r="7" fill="#fff" stroke="#1b78c8" stroke-width="1.500"/><circle cx="5.500" cy="6.500" r="1" fill="#1b78c8"/><circle cx="10.500" cy="6.500" r="1" fill="#1b78c8"/><path d="M4.500 10c2 2.500 5 2.500 7 0" fill="none" stroke="#1b78c8"/></svg>
  <svg class="ime-i ime-mic" viewBox="0 0 16 16"><rect x="5" y="0" width="6" height="11" rx="3" fill="#1b78c8"/><path d="M2.500 7c0 7 11 7 11 0M8 13v3M5 15.500h6" fill="none" stroke="#1b78c8" stroke-width="1.400"/></svg>
  <svg class="ime-k" viewBox="0 0 18 14"><rect width="18" height="14" rx="2" fill="#1b78c8"/><path d="M3 4h12M3 7h12M5 10.500h8" stroke="#fff" stroke-width="1.500" stroke-dasharray="1.500 1"/></svg>
  <svg class="ime-i ime-user" viewBox="0 0 16 16"><circle cx="7" cy="4" r="3.500" fill="#9fb4c8"/><path d="M1 11c0-4 10-4 10 0v2H1z" fill="#b6c6d4"/><rect x="8" y="9" width="8" height="6" fill="#fff" stroke="#9fb4c8"/></svg>
  <svg class="ime-i ime-shirt" viewBox="0 0 16 16"><path d="M5 1L0 4l2 4 2-1v8h8V7l2 1 2-4-5-3c-1 2-5 2-6 0z" fill="#1b78c8"/></svg>
  <svg class="ime-i ime-wrench" viewBox="0 0 16 16"><path d="M15 4l-3 2-2-2 2-3c-4-1-6 2-5 5L1 12c-1 2 1 4 3 3l6-6c3 1 6-1 5-5z" fill="#1b78c8"/></svg>
</div>

<!-- floating: modal dialog window -->
<div class="dialog">
  <div class="dlg-title"><span>选择参数化图形</span><svg viewBox="0 0 10 10"><path d="M0 0l10 10M10 0L0 10" stroke="#333"/></svg></div>
  <div class="dlg-body">
    <div class="grp grp-shapes">
      <span class="legend">图形</span>
      <div class="gallery">
        <div class="cell">
          <svg viewBox="0 0 140 140">
            <rect width="140" height="140" fill="#6e92a8"/>
            <text class="dt dt-a" x="19" y="24">四棱锥台</text>
            <text class="dt dt-a" x="18" y="44">形独立基础</text>
            <path class="ybr" d="M37.300 103H92.300V114H37.300zM37.300 103L57.300 90.700H84.700L92.300 103M57.300 90.700L74 70.300H100.700L84.700 90.700M37.300 103L65.700 73L74 70.300M100.700 70.300H109L115.700 75.300V88L92.300 114M92.300 103L115.700 75.300"/>
            <path class="dk" d="M37 107V126M92 107V126M76 66L88 59M108 72L120 66M95 90H104M100 114H112M26 91H36M26 101H36M26 117H36"/>
            <path class="dk ar" d="M39 121H91M32 92V101M32 103V117M78 64L105 64M103 71L95 88M125 85L105 112"/>
            <g class="wt wt-a"><text x="88" y="59" text-anchor="middle">a1</text><text x="88" y="81">b1</text><text x="121" y="109">b</text><text x="11" y="100">h1</text><text x="13" y="115">h</text><text x="59" y="125">a</text></g>
          </svg>
        </div>
        <div class="cell">
          <svg viewBox="0 0 140 140">
            <rect width="140" height="140" fill="#6e92a8"/>
            <text class="dt dt-a" x="31" y="32">杯形基础</text>
            <path class="ym" d="M21 50.700H77V110.700H21zM28.700 59.700H69.300V102H28.700zM37 68H61.700V93H37zM21 50.700L37 68M77 50.700L61.700 68M21 110.700L37 93M77 110.700L61.700 93M100 61.300H123.700V73L131 94.700V111.300H92.700V94.700L100 78z"/>
            <path class="cup" d="M105 61.300H115.300L114.300 95.300H108.300z"/>
            <path class="dk" d="M9 51H20M9 111H20M21 112V122M77 112V122M80 60H98M80 77H98M80 94H98M80 111H98M124 61H135"/>
            <path class="dk ar" d="M14 52V110M25 60V101M30 106H68M22 117H76M39 80H60M87 62V76M87 78V93M87 95V110M107 57H116M128 62V95"/>
            <g class="wt wt-a"><text x="8" y="85">b</text><text x="19" y="85">b</text><text x="28" y="85">1b3</text><text x="58" y="85">b2</text><text x="40" y="72">a3</text><text x="41" y="98">a2</text><text x="42" y="110">a1</text><text x="44" y="129">a</text><text x="80" y="72">h3</text><text x="80" y="87">h2</text><text x="80" y="105">h1</text><text x="105" y="54">a2</text><text x="122" y="85">h</text><text x="104" y="109">a3</text></g>
          </svg>
        </div>
        <div class="cell cell-sel"><svg viewBox="0 0 140 140"><use href="#d-san"/></svg></div>

        <div class="cell">
          <svg viewBox="0 0 140 140">
            <rect width="140" height="140" fill="#6e92a8"/>
            <text class="dt dt-a dt-s" x="14" y="28">独立基础</text>
            <text class="dt dt-a dt-s" x="14" y="48">三台有杯口</text>
            <path class="ym" d="M15.300 62.300H72V122.300H15.300zM23.300 71H64V113.300H23.300zM31.300 79.300H56V105.300H31.300zM90.700 72.700H110.700V88.700H117.300V104.300H124V121.700H77.300V104.300H83.300V88.700H90.700z"/>
            <path class="cup" d="M95.700 73.300H106.700L103.300 101H99zM40 86h7v10h-7z"/>
            <path class="dk" d="M5 62H15M5 122H15M15 123V130M72 123V130M82 72H92M120 72H132M120 88H132M120 104H132M120 121H132M82 102H104"/>
            <path class="dk ar" d="M11 63V121M20 72V112M25 66H63M17 127H70M33 108H55M86 73V101M96 68H106M128 73V87M128 89V103M128 105V120"/>
            <g class="wt wt-a"><text x="9" y="98">b</text><text x="14" y="86">b1</text><text x="29" y="101">b3</text><text x="53" y="98">b2</text><text x="37" y="78">a1</text><text x="37" y="90">a3</text><text x="35" y="112">a2</text><text x="39" y="127">a</text><text x="94" y="62">a3</text><text x="76" y="92">h</text><text x="94" y="114">a4</text><text x="117" y="86">h3</text><text x="117" y="102">h2</text><text x="117" y="120">h1</text></g>
          </svg>
        </div>
        <div class="cell">
          <svg viewBox="0 0 140 140">
            <rect width="140" height="140" fill="#6e92a8"/>
            <text class="dt dt-a dt-s" x="42" y="28">独立基础</text>
            <text class="dt dt-a dt-s" x="42" y="48">双层带坡</text>
            <path class="ybr" d="M22 53.700H76.700V118.300H22zM29.300 62.700H68.300V109.300H29.300zM38.300 73.300H59.700V99.300H38.300zM29.300 62.700L38.300 73.300M68.300 62.700L59.700 73.300M29.300 109.300L38.300 99.300M68.300 109.300L59.700 99.300M80 97.700H126.700V118.300H80zM87.700 97L97.700 83H109.700L119.300 97"/>
            <path class="dk" d="M10 54H22M10 118H22M21 63H30M21 109H30M22 118V126M77 118V126M116 83H136M120 97.700H136M120 118H136M63 74H71M63 99H71"/>
            <path class="dk ar" d="M16 55V117M25 64V108M24 123H75M40 104H58M39 67H58M64 75V98M131 85V96M131 100V117"/>
            <g class="wt wt-a"><text x="11" y="91">b</text><text x="21" y="93">b1</text><text x="40" y="70">a2</text><text x="56" y="91">b2</text><text x="41" y="113">a1</text><text x="45" y="130">a</text><text x="121" y="95">h2</text><text x="121" y="116">h1</text></g>
          </svg>
        </div>
        <div class="cell">
          <svg viewBox="0 0 140 140">
            <rect width="140" height="140" fill="#6e92a8"/>
            <text class="dt dt-c" x="9" y="22">四棱锥台形</text>
            <text class="dt dt-c" x="9" y="42">独立基础带柱</text>
            <path class="ym" d="M35 109H91V121H35zM35 109L59 84H86L91 109M59 84L76 66H100L86 84M72 66V58H96V66M96 58L115 78L91 121M100 66L115 78V90L91 121"/>
            <path class="dk" d="M29 84H45M29 96H40M29 109H35M29 121H35M35 123V134M91 123V134"/>
            <path class="dk ar" d="M36 130H90M33 85V95M33 97V108M33 110V120M78 52L98 47M110 70L100 82M118 94L102 118"/>
            <g class="wt wt-d"><text x="15" y="89">h2</text><text x="15" y="103">h1</text><text x="16" y="117">h</text><text x="60" y="138">a</text><text x="122" y="110">b</text><text x="102" y="72">b1</text><text x="91" y="50">a1</text></g>
          </svg>
        </div>

        <div class="cell">
          <svg viewBox="0 0 140 140">
            <rect width="140" height="140" fill="#6e92a8"/>
            <text class="dt-blue" x="42" y="15">带短柱</text>
            <text class="dt-blue" x="19" y="32">杯口独立基础</text>
            <path class="yd" d="M3.300 45.300H66.700V125.700H3.300zM18.300 59.300H52.700V110.700H18.300zM28.300 71.300H42.700V99.700H28.300zM96.300 41.300H113.300V91.300H122.300V106.300H135.700V125.700H72.300V106.300H85.700V91.300H96.300z"/>
            <path class="gc" d="M101.300 41.300L102.300 53.300H107.300L108.300 41.300"/>
            <path class="bl" d="M3.300 127V139M66.700 127V139M3.300 134H27M43 134H66.700M59.300 46V124M47.300 60V110M36 72V98M28 90H42M18.300 105H52M113 41H128M113 53H120M128.300 41V125M124 91H134M124 106H134"/>
            <g class="wt wt-c">
              <text x="30" y="137">a</text><text x="29" y="110">x1</text><text x="19" y="95">x2</text>
              <text transform="translate(64 92) rotate(-90)">b</text><text transform="translate(50 90) rotate(-90)">y1</text><text transform="translate(38 90) rotate(-90)">y2</text>
              <text transform="translate(126 53) rotate(-90)">h4</text><text transform="translate(132 82) rotate(-90)">h3</text><text transform="translate(132 108) rotate(-90)">h2</text><text transform="translate(132 122) rotate(-90)">h1</text>
            </g>
          </svg>
        </div>
      </div>
    </div>
    <div class="dlg-right">
      <div class="params">
        <table class="grid grid-param">
          <tr><th class="num"></th><th class="name">属性名称</th><th class="val">属性值</th></tr>
          <tr class="cur"><td class="num">1</td><td class="pname2 mono">a(mm)</td><td class="vsel mono">4600</td></tr>
          <tr><td class="num">2</td><td class="mono">b(mm)</td><td class="mono">3600</td></tr>
          <tr><td class="num">3</td><td class="mono">a1(mm)</td><td class="mono">3310</td></tr>
          <tr><td class="num">4</td><td class="mono">b1(mm)</td><td class="mono">2150</td></tr>
          <tr><td class="num">5</td><td class="mono">a2(mm)</td><td class="mono">950</td></tr>
          <tr><td class="num">6</td><td class="mono">b2(mm)</td><td class="mono">1400</td></tr>
          <tr><td class="num">7</td><td class="mono">h1(mm)</td><td class="mono">400</td></tr>
          <tr><td class="num">8</td><td class="mono">h2(mm)</td><td class="mono">350</td></tr>
          <tr><td class="num">9</td><td class="mono">h3(mm)</td><td class="mono">0</td></tr>
        </table>
      </div>
      <div class="grp grp-preview">
        <span class="legend">大图预览</span>
        <svg class="preview" viewBox="0 0 210 210"><use href="#d-san"/></svg>
      </div>
      <div class="dlg-btns"><button class="dbtn dbtn-ok">确定</button><button class="dbtn">取消</button></div>
    </div>
  </div>
  <div class="redbox"></div>
</div>
</body>
</html>
```

FILE: styles.css
```css
* { box-sizing: border-box; }
html, body { margin: 0; height: 768px; overflow: hidden; }
body {
  width: 1366px;
  display: flex;
  flex-direction: column;
  background: #f0f0f0;
  color: #111;
  font: 12px/16px "Noto Sans CJK SC", "Liberation Sans", sans-serif;
  position: relative;
}
svg { display: block; flex: none; }
i { font-style: normal; }
.sprite { position: absolute; width: 0; height: 0; }

/* spacing helpers */
.ml2 { margin-left: 2px; } .ml3 { margin-left: 3px; } .ml5 { margin-left: 5px; } .ml6 { margin-left: 6px; }
.ml7 { margin-left: 7px; } .ml8 { margin-left: 8px; } .ml10 { margin-left: 10px; } .ml15 { margin-left: 15px; }
.push { margin-left: auto; }
.nowrap { white-space: nowrap; }

.ic12 { width: 13px; height: 16px; }
.ic14 { width: 14px; height: 14px; }
.ic16 { width: 16px; height: 16px; }
.caret { display: inline-block; width: 0; height: 0; border: 3px solid transparent; border-top: 4px solid #222; border-bottom: 0; margin-left: 5px; flex: none; }
.caret-g { border-top-color: #888; }
.caret.ml2 { margin-left: 0; }

/* title bar */
.titlebar { height: 23px; flex: none; background: #fff; display: flex; align-items: center; padding-left: 3px; }
.logo { width: 16px; height: 16px; }
.title-text { margin-left: 5px; font-size: 13px; color: #777; white-space: nowrap; }
.winctl { margin-left: auto; display: flex; align-items: center; gap: 36px; padding-right: 20px; }
.winctl svg { width: 10px; height: 10px; }

/* menu */
.menubar { height: 30px; flex: none; display: flex; background: #f4f4f4; }
.menu-items { width: 933px; display: flex; align-items: center; gap: 10.500px; padding-left: 7px; background: #fafafa; white-space: nowrap; }
.mi-icon { display: flex; align-items: center; gap: 3px; }
.mi-guang { margin-left: -1px; }
.news { width: 188px; margin-left: 4px; background: #fff; border-radius: 3px; display: flex; align-items: center; justify-content: flex-end; padding-right: 32px; color: #3a7a10; white-space: nowrap; overflow: hidden; }
.userbox { flex: 1; margin-left: 5px; background: #fafafa; display: flex; align-items: center; gap: 4px; padding-left: 1px; white-space: nowrap; }
.more { font: 14px/16px "Liberation Sans", sans-serif; font-weight: 700; color: #222; padding-right: 6px; align-self: flex-start; margin-top: 1px; }

/* toolbar */
.toolbar { height: 30px; flex: none; display: flex; gap: 3px; background: #f0f0f0; padding-bottom: 1px; }
.tseg { display: flex; align-items: center; background: linear-gradient(#fbfbfb, #f4f4f4); border-radius: 3px; white-space: nowrap; }
.tseg1 { width: 151px; padding-left: 6px; }
.tseg2 { width: 546px; padding-left: 4px; }
.tseg3 { flex: 1; padding-left: 4px; }
.tb { display: inline-flex; align-items: center; gap: 3px; white-space: nowrap; }
.tb.dis { color: #8a8a8a; }
.tsep { width: 1px; height: 22px; background: #c4c4c4; flex: none; }
.sigma { font: 700 14px/16px "DejaVu Serif", serif; width: 9px; margin-right: 1px; }
.view2d { width: 62px; height: 22px; border: 1px solid #707070; display: flex; align-items: center; padding-left: 3px; gap: 3px; color: #888; background: #f4f4f4; }
.view2d .caret { margin-left: auto; margin-right: 3px; }
.sq { width: 15px; height: 13px; background: #e4e4e4; border: 1px solid #bbb; }

/* workspace */
.workspace { height: 625px; flex: none; display: flex; background: #f0f0f0; }
.nav { width: 165px; flex: none; display: flex; flex-direction: column; }
.nav-head { height: 16px; border: 1px solid #8e8e8e; border-bottom: 0; display: flex; align-items: center; line-height: 14px; background: #f0f0f0; flex: none; }
.nav-name { font-size: 13px; margin-right: auto; }
.nav-pin { width: 10px; height: 12px; margin-right: 9px; }
.nav-x { width: 9px; height: 9px; margin-right: 4px; }
.nav-btn { height: 21px; flex: none; margin: 1px 0 0; width: 165px; background: #ececec; border: 1px solid #b0b0b0; border-top-color: #fff; border-left-color: #f8f8f8; font: inherit; color: #111; padding: 0; }
.nav-btn-2 { margin-top: 1px; }
.nav-tools { height: 27px; flex: none; margin-top: 2px; padding: 6px 0 0 6px; display: flex; gap: 6px; background: linear-gradient(#f4f4f4, #fff); }
.nav-tools svg { width: 18px; height: 16px; }
.nav-tree { height: 488px; flex: none; margin-left: 2px; width: 161px; border: 1px solid #888; background: #fff; display: flex; overflow: hidden; }
.rows { flex: 1; min-width: 0; padding-top: 1px; overflow: hidden; }
.comp-tree .rows { padding-top: 0; }
.row { height: 16px; display: flex; align-items: center; position: relative; white-space: nowrap; }
.row i, .crow i, .mono, .sbox i { font-family: "Liberation Mono", monospace; font-size: 11px; letter-spacing: -.6px; }
.chev { width: 16px; height: 16px; }
.row .chev { margin-left: 4px; }
.fold { width: 16px; height: 16px; margin: 0 4px 0 4px; }
.row.c { padding-left: 44px; }
.ric { width: 15px; height: 15px; margin-right: 5px; }
.row.c::before { content: ""; position: absolute; left: 32px; top: -8px; width: 12px; height: 16px; border-left: 1px dotted #666; border-bottom: 1px dotted #666; }
.row.c::after { content: ""; position: absolute; left: 13px; top: 0; height: 16px; border-left: 1px dotted #666; }
.row.c.last::after { display: none; }
.row.sel { background: linear-gradient(90deg, transparent 41px, #d8d8d8 41px, #d8d8d8 134px, transparent 134px); }
.mini { width: 12px; height: 14px; margin-left: 1px; }

.scroll { width: 16px; flex: none; display: flex; flex-direction: column; background: #f2f2f2; }
.sb { height: 20px; flex: none; display: flex; align-items: center; justify-content: center; }
.sb svg { width: 12px; height: 12px; }
.scroll-nav { margin-top: 0; }
.scroll-nav .thumb { height: 250px; margin-top: 198px; background: #c8c8c8; }
.scroll-nav .sb:first-child { margin-top: 1px; }

.editor { width: 572px; margin-left: 5px; flex: none; display: flex; flex-direction: column; background: #fff; }
.comp-tools { height: 27px; flex: none; display: flex; align-items: center; padding: 2px 0 0 4px; background: linear-gradient(#fafafa, #f2f2f2); overflow: hidden; border-radius: 3px; }
.comp-tools .tsep { height: 20px; }
.comp-tools .tb { gap: 4px; }
.comp-tools .caret { margin-left: 2px; }
.floor { width: 62px; height: 22px; margin-left: 6px; background: #fff; display: flex; align-items: center; padding-left: 2px; white-space: nowrap; flex: none; }
.comp-tools .floor .caret { margin-left: auto; margin-right: 5px; }
.az { font: 700 8px/8px "Liberation Sans", sans-serif; color: #a02828; text-align: center; width: 8px; }
.ic-sort { width: 9px; height: 16px; margin-left: -3px; }
.panes { flex: 1; display: flex; min-height: 0; }
.comp-pane { width: 188px; flex: none; display: flex; flex-direction: column; margin-left: 2px; }
.search-row { height: 33px; flex: none; display: flex; align-items: flex-end; gap: 6px; padding-bottom: 2px; }
.search-input { width: 156px; height: 24px; border: 1px solid #777; border-bottom-width: 2px; border-right-width: 2px; color: #888; font-size: 13px; line-height: 20px; padding-left: 2px; background: #fff; }
.search-row .ic16 { margin-bottom: 4px; }
.comp-tree { flex: 1; min-height: 0; width: 180px; border: 1px solid #999; display: flex; overflow: hidden; background: #fff; margin-bottom: 3px; }
.crow { height: 16px; display: flex; align-items: center; position: relative; white-space: nowrap; color: #111; }
.crow.p { padding-left: 22px; }
.g { width: 12px; height: 12px; margin: 0 3px 0 3px; }
.crow.p .g { margin-right: 8px; }
.crow.c { padding-left: 58px; }
.crow.c::before { content: ""; position: absolute; left: 30px; top: -8px; width: 28px; height: 16px; border-left: 1px dotted #666; border-bottom: 1px dotted #666; }
.cbody { display: flex; align-items: center; height: 16px; padding-right: 2px; }
.cbody .g { margin: 0 0 0 4px; }
.crow.sel .cbody { background: #316ac5; color: #fff; width: 87px; }
.scroll-comp { background: #f2f2f2; }
.scroll-comp .sb { margin-top: 1px; }
.scroll-comp .thumb { height: 400px; margin-top: 22px; background: #c8c8c8; }

.prop-pane { flex: 1; min-width: 0; margin-left: 0; }
.tabstrip { height: 24px; padding-top: 3px; border-bottom: 1px solid #d4d4d4; width: 100%; display: flex; align-items: flex-end; }
.tab { height: 21px; width: 63px; border: 1px solid #d0d0d0; border-bottom: 1px solid #fff; margin-bottom: -1px; text-align: center; line-height: 19px; font-size: 13px; background: #fff; }
.grid { border-collapse: collapse; table-layout: fixed; background: #fff; }
.grid th { font-weight: 400; background: linear-gradient(#fff, #ebebeb); border: 1px solid #c8c8c8; padding: 0; }
.grid td { border: 1px solid #bdbdbd; padding: 0 0 0 2px; height: 19px; line-height: 16px; white-space: nowrap; overflow: hidden; }
.grid th.val { background: linear-gradient(#fbdca2, #f1c060); color: #5a005a; }
.grid td.num { text-align: center; padding: 0; background: linear-gradient(#fff, #e8e8e8); font-family: "Liberation Mono", monospace; font-size: 11px; }
.grid .cur td.num { background: #fbd38a; color: #600050; }
.grid .cur td.pname, .grid .cur td.pname2 { background: #0078d7; color: #fff; }
.grid td.vsel { background: #d5e7f8; }
.grid-prop { margin: 4px 0 0 3px; width: 371px; }
.grid-prop th { height: 23px; }
.grid-prop .num { width: 22px; }
.grid-prop .name { width: 191px; }
.grid-prop .val { width: 126px; }
.grid-prop .add { width: 32px; }
.pname { padding-left: 20px !important; font-size: 12px; }
.link { color: #0000e0; }
.ctr { text-align: center; padding: 0 !important; }
.check { display: inline-block; width: 13px; height: 13px; border: 1px solid #444; vertical-align: middle; background: #fff; }

.param-win { width: 601px; flex: none; height: 618px; border: 1px solid #555; border-top: 0; border-bottom: 2px solid #777; background: linear-gradient(#b6c9dc, #d2dfec 12%, #dbe6f2); padding: 8px 7px 7px 8px; display: flex; flex-direction: column; }
.param-title { height: 22px; color: #999; flex: none; line-height: 18px; }
.cad { width: 585px; height: 580px; background: #000; flex: none; }
.cad svg { width: 585px; height: 580px; }
.cw path { fill: none; stroke: #fff; stroke-width: 1; }
.cr path { fill: none; stroke: #f00; stroke-width: 2.400; }
.cd { fill: #fff; }
.ct text { fill: #fff; font-family: "Noto Serif CJK SC", "Noto Sans CJK SC", serif; }
.ct26 { font-size: 26.600px; font-weight: 300; }
.ct3600 { font-family: "Liberation Serif", serif !important; font-size: 28px; }
.ct42 { font-size: 42.400px; font-weight: 300; }
.right-strip { flex: 1; background: #fff; }
.right-strip i { display: block; width: 1px; height: 100%; background: #c8c8c8; margin-left: 16px; }

/* status bar */
.statusbar { height: 20px; flex: none; display: flex; gap: 3px; background: #f0f0f0; }
.sbox { height: 19px; border: 1px solid #d8d8d8; background: #f8f8f8; display: flex; align-items: center; padding-left: 2px; font-size: 13px; white-space: nowrap; overflow: hidden; }
.s1 { width: 147px; }
.s2 { width: 78px; }
.s3 { width: 50px; }
.s4 { width: 1013px; margin-left: -3px; }
.s5 { flex: 1; margin-left: -1px; }

/* taskbar */
.taskbar { height: 40px; flex: none; display: flex; position: relative; z-index: 5; color: #fff; background: linear-gradient(90deg, rgba(26, 26, 26, .94) 983px, #04101a 983px, #04101a 1297px, #000 1297px); }
.start { width: 37px; background: #000; display: flex; align-items: center; justify-content: center; }
.start svg { width: 16px; height: 16px; }
.tsearch { width: 355px; background: #333; display: flex; align-items: center; padding-left: 20px; }
.cortana { width: 21px; height: 21px; border: 3px solid #ddd; border-radius: 50%; flex: none; }
.tsearch-text { margin-left: 6px; font-size: 14px; color: #8a8a8a; letter-spacing: -.15px; white-space: nowrap; }
.tmic { width: 11px; height: 20px; margin-left: 113px; }
.tapps { width: 591px; position: relative; display: flex; align-items: center; }
.ta { position: absolute; top: 9px; width: 22px; height: 22px; }
.ta-view { left: 14px; top: 11px; width: 20px; height: 18px; }
.ta-fan { left: 64px; }
.ta-ie { left: 116px; }
.ta-spiral { left: 165px; top: 7px; width: 30px; height: 24px; }
.ta-edge { left: 220px; }
.ta-ie2 { left: 265px; top: 8px; width: 26px; height: 24px; }
.ta-folder { left: 315px; }
.ta-green { left: 362px; top: 8px; width: 24px; height: 24px; }
.ta-note { left: 410px; top: 8px; width: 24px; height: 24px; }
.ta-g { left: 458px; top: 8px; width: 24px; height: 24px; }
.ta-active { position: absolute; left: 495px; top: 0; width: 47px; height: 40px; background: rgba(255, 255, 255, .16); display: flex; align-items: center; justify-content: center; }
.ta-active svg { width: 24px; height: 24px; }
.ta-text { position: absolute; left: 555px; top: 12px; font-size: 12px; color: #ddd; }
.tapps::after { content: ""; position: absolute; left: 355px; top: 38px; width: 187px; height: 2px; background: #7ab4f0; }
.tray { flex: 1; position: relative; }
.cpu { position: absolute; left: 2px; top: 3px; width: 60px; display: flex; flex-direction: column; align-items: center; line-height: 17px; font-size: 12px; }
.tr { position: absolute; }
.tr-up { left: 76px; top: 16px; width: 13px; height: 8px; }
.tr-bat { left: 99px; top: 13px; width: 16px; height: 14px; }
.tr-wifi { left: 123px; top: 13px; width: 17px; height: 15px; }
.tr-vol { left: 148px; top: 12px; width: 16px; height: 16px; }
.tr-kb { left: 171px; top: 12px; width: 22px; height: 16px; }
.tr-zh { position: absolute; left: 204px; top: 11px; font-size: 13px; }
.tr-s { left: 231px; top: 11px; width: 16px; height: 18px; }
.clock { position: absolute; left: 256px; top: 3px; width: 72px; display: flex; flex-direction: column; align-items: center; line-height: 17px; }
.tr-act { left: 344px; top: 12px; width: 16px; height: 16px; }

/* floating widgets */
.badge { position: absolute; left: 702px; top: -22px; width: 42px; height: 42px; border-radius: 50%; background: linear-gradient(#2ea84a, #5ac85a); box-shadow: 0 0 0 2px #d8d8d8, 0 2px 3px 1px rgba(0, 0, 0, .35); color: #fff; font: 700 11px/12px "Liberation Sans", sans-serif; text-align: center; padding-top: 25px; z-index: 6; }
.ime { position: absolute; left: 865px; top: 37px; width: 207px; height: 23px; z-index: 7; display: flex; align-items: center; background: linear-gradient(90deg, transparent 12px, #f4f7fa 12px); border: 1px solid transparent; border-right-color: #a9c4de; border-top-color: #a9c4de; border-bottom-color: #a9c4de; color: #1b78c8; }
.ime-s { width: 28px; height: 25px; margin-top: -1px; flex: none; }
.ime-en { font-weight: 700; font-size: 14px; margin-left: 5px; width: 14px; flex: none; }
.ime-p { font-weight: 700; font-size: 14px; width: 14px; flex: none; margin-left: 9px; }
.ime-i { width: 15px; height: 15px; }
.ime-smile { width: 16px; height: 16px; margin-left: 7px; }
.ime-mic { width: 14px; height: 16px; margin-left: 7px; }
.ime-k { width: 16px; height: 13px; margin-left: 8px; }
.ime-user { width: 17px; height: 16px; margin-left: 8px; }
.ime-shirt { width: 14px; margin-left: 4px; }
.ime-wrench { margin-left: 7px; }

/* dialog */
.dialog { position: absolute; left: 239px; top: 201px; width: 744px; height: 567px; z-index: 3; background: #f0f0f0; border: 1px solid #4a90d9; border-bottom: 0; box-shadow: 0 0 6px rgba(0, 0, 0, .25); }
.dlg-title { height: 25px; background: #fff; display: flex; align-items: center; padding: 0 10px 0 3px; justify-content: space-between; font-size: 12px; }
.dlg-title svg { width: 10px; height: 10px; }
.dlg-body { display: flex; align-items: flex-start; }
.grp { position: relative; border: 1px solid #dadada; }
.grp-shapes { margin: 15px 0 0 10px; width: 493px; height: 540px; padding: 10px 0 0 3px; }
.legend { position: absolute; left: 6px; top: -9px; background: #f0f0f0; padding: 0 1px; line-height: 16px; }
.gallery { display: grid; grid-template-columns: repeat(3, 156px); grid-auto-rows: 160px; gap: 2px; }
.cell { border: 1px solid #fff; border-right: 2px solid #a6a6a6; border-bottom: 2px solid #a6a6a6; padding: 8px 0 0 6px; }
.cell svg { width: 140px; height: 140px; }
.cell-sel { background: #00ffff; border-color: #00ffff; margin-left: 1px; }
.dlg-right { width: 236px; margin-left: 3px; display: flex; flex-direction: column; }
.params { width: 216px; height: 267px; margin: 9px 0 0 8px; border: 1px solid #9c9c9c; padding: 1px 0 0 1px; background: #fff; }
.grid-param { width: 211px; }
.grid-param th { height: 23px; }
.grid-param .num { width: 21px; }
.grid-param .name { width: 91px; }
.grid-param .val { width: 99px; }
.grp-preview { margin-top: 12px; height: 229px; padding: 10px 0 0 7px; border-right: 0; }
.grp-preview .legend { left: 7px; }
.preview { width: 210px; height: 210px; }
.dlg-btns { display: flex; gap: 27px; margin: 8px 0 0 64px; }
.dbtn { width: 72px; height: 24px; background: #e6e6e6; border: 1px solid #adadad; font: inherit; padding: 0; }
.dbtn-ok { border-color: #0078d7; }
.redbox { position: absolute; left: 503px; top: 207px; width: 205px; height: 37px; border: 4px solid #f00; }

/* diagram styling */
.dt { fill: #2e2a85; font-family: "Noto Serif CJK SC", "Noto Sans CJK SC", serif; font-weight: 300; }
.dt-big { font-size: 31px; }
.dt-a { font-size: 17px; letter-spacing: 4px; }
.dt-s { letter-spacing: 3.700px; }
.dt-c { font-size: 16.500px; letter-spacing: 1.600px; }
.dt-blue { fill: #0a0a90; font-size: 15.800px; font-family: "Noto Sans CJK SC", sans-serif; }
.yb { fill: none; stroke: #ffff00; stroke-width: 2; }
.ybr { fill: none; stroke: #f5ec00; stroke-width: 1.500; }
.ym { fill: none; stroke: #bcbc5c; stroke-width: 1; }
.yd { fill: none; stroke: #d8d400; stroke-width: 1; }
.cup { fill: none; stroke: #9cc0c4; stroke-width: .8; }
.gc { fill: none; stroke: #0a7a20; stroke-width: 1; }
.dk { fill: none; stroke: #1c1c1c; stroke-width: .9; }
.dk2 { fill: none; stroke: #1c1c1c; stroke-width: 1.700; }
.ar { marker-start: url(#arr); marker-end: url(#arr); }
.bl { fill: none; stroke: #000; stroke-width: .8; }
.wt text { fill: #fff; font-family: "Liberation Serif", serif; }
.wt-big text { font-size: 25px; }
.wt-a text { font-size: 15px; }
.wt-d text { font-size: 14px; }
.wt-c text { font-size: 11px; font-family: "Liberation Mono", monospace; }
```
